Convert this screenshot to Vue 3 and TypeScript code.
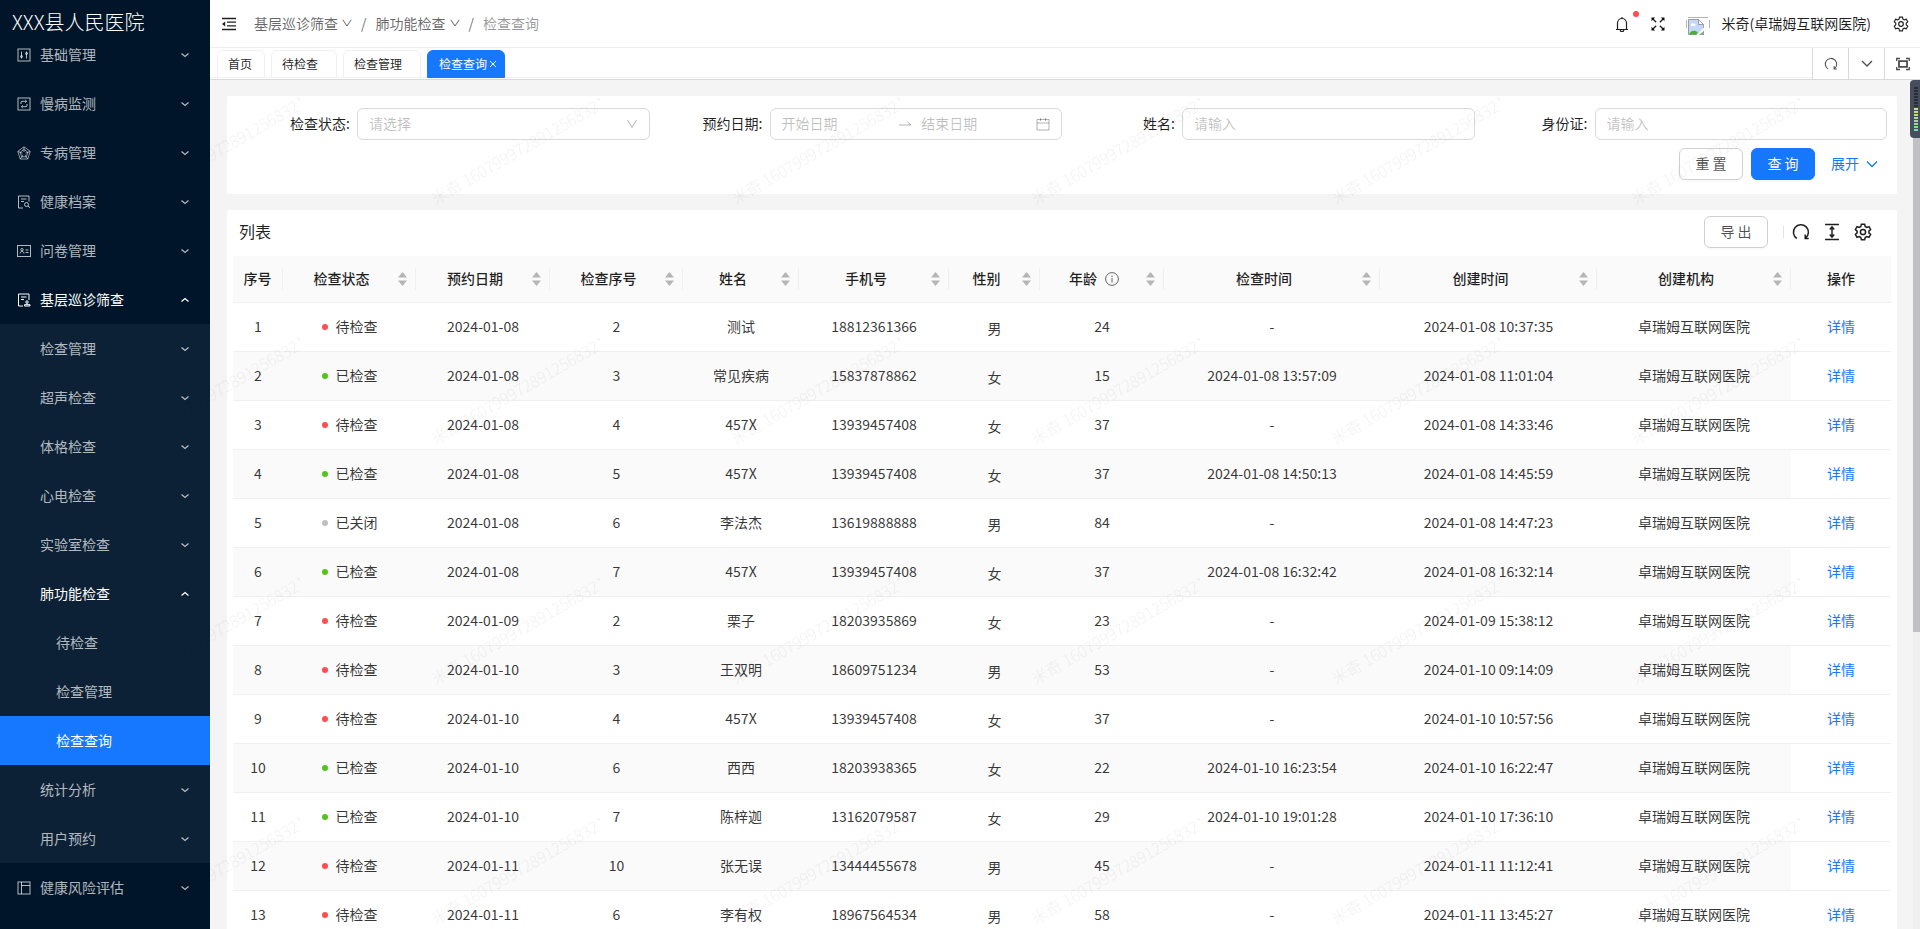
<script setup lang="ts">
interface MenuItem { text: string; level: number; icon?: string; arrow?: 'down' | 'up'; active?: boolean; open?: boolean }
interface Column { title: string; width: number; sort?: boolean; info?: boolean }
interface Row { status: string; date: string; no: number; name: string; phone: string; sex: string; age: number; checked: string; created: string }

const menu: MenuItem[] = [
  { text: '基础管理', level: 1, icon: 'control', arrow: 'down' },
  { text: '慢病监测', level: 1, icon: 'sync', arrow: 'down' },
  { text: '专病管理', level: 1, icon: 'radar', arrow: 'down' },
  { text: '健康档案', level: 1, icon: 'search', arrow: 'down' },
  { text: '问卷管理', level: 1, icon: 'idcard', arrow: 'down' },
  { text: '基层巡诊筛查', level: 1, icon: 'audit', arrow: 'up', open: true },
  { text: '检查管理', level: 2, arrow: 'down' },
  { text: '超声检查', level: 2, arrow: 'down' },
  { text: '体格检查', level: 2, arrow: 'down' },
  { text: '心电检查', level: 2, arrow: 'down' },
  { text: '实验室检查', level: 2, arrow: 'down' },
  { text: '肺功能检查', level: 2, arrow: 'up', open: true },
  { text: '待检查', level: 3 },
  { text: '检查管理', level: 3 },
  { text: '检查查询', level: 3, active: true },
  { text: '统计分析', level: 2, arrow: 'down' },
  { text: '用户预约', level: 2, arrow: 'down' },
  { text: '健康风险评估', level: 1, icon: 'layout', arrow: 'down' },
]

const tabs = [
  { text: '首页', closable: false, active: false },
  { text: '待检查', closable: true, active: false },
  { text: '检查管理', closable: true, active: false },
  { text: '检查查询', closable: true, active: true },
]

const columns: Column[] = [
  { title: '序号', width: 50 },
  { title: '检查状态', width: 133, sort: true },
  { title: '预约日期', width: 134, sort: true },
  { title: '检查序号', width: 133, sort: true },
  { title: '姓名', width: 116, sort: true },
  { title: '手机号', width: 150, sort: true },
  { title: '性别', width: 91, sort: true },
  { title: '年龄', width: 124, sort: true, info: true },
  { title: '检查时间', width: 216, sort: true },
  { title: '创建时间', width: 217, sort: true },
  { title: '创建机构', width: 194, sort: true },
  { title: '操作', width: 100 },
]

const dots: Record<string, string> = { 待检查: 'red', 已检查: 'green', 已关闭: 'gray' }

const row = (status: string, date: string, no: number, name: string, phone: string, sex: string, age: number, checked: string, created: string): Row =>
  ({ status, date, no, name, phone, sex, age, checked, created })

const rows: Row[] = [
  row('待检查', '2024-01-08', 2, '测试', '18812361366', '男', 24, '-', '2024-01-08 10:37:35'),
  row('已检查', '2024-01-08', 3, '常见疾病', '15837878862', '女', 15, '2024-01-08 13:57:09', '2024-01-08 11:01:04'),
  row('待检查', '2024-01-08', 4, '457X', '13939457408', '女', 37, '-', '2024-01-08 14:33:46'),
  row('已检查', '2024-01-08', 5, '457X', '13939457408', '女', 37, '2024-01-08 14:50:13', '2024-01-08 14:45:59'),
  row('已关闭', '2024-01-08', 6, '李法杰', '13619888888', '男', 84, '-', '2024-01-08 14:47:23'),
  row('已检查', '2024-01-08', 7, '457X', '13939457408', '女', 37, '2024-01-08 16:32:42', '2024-01-08 16:32:14'),
  row('待检查', '2024-01-09', 2, '栗子', '18203935869', '女', 23, '-', '2024-01-09 15:38:12'),
  row('待检查', '2024-01-10', 3, '王双明', '18609751234', '男', 53, '-', '2024-01-10 09:14:09'),
  row('待检查', '2024-01-10', 4, '457X', '13939457408', '女', 37, '-', '2024-01-10 10:57:56'),
  row('已检查', '2024-01-10', 6, '西西', '18203938365', '女', 22, '2024-01-10 16:23:54', '2024-01-10 16:22:47'),
  row('已检查', '2024-01-10', 7, '陈梓迦', '13162079587', '女', 29, '2024-01-10 19:01:28', '2024-01-10 17:36:10'),
  row('待检查', '2024-01-11', 10, '张无误', '13444455678', '男', 45, '-', '2024-01-11 11:12:41'),
  row('待检查', '2024-01-11', 6, '李有权', '18967564534', '男', 58, '-', '2024-01-11 13:45:27'),
]
</script>

<template>
  <div class="layout">
    <aside class="sider">
      <h1 class="brand">XXX县人民医院</h1>
      <nav class="menu">
        <a v-for="(m, i) in menu" :key="i" href="#" class="item" :class="['level' + m.level, { active: m.active, open: m.open }]">
          <svg v-if="m.icon" class="menu-icon" viewBox="0 0 14 14">
            <g v-if="m.icon === 'control'"><rect x="1" y="1" width="12" height="12" /><path d="M4.5 3.5v7M9.5 3.5v7" /><circle cx="4.5" cy="8.5" r="1" /><circle cx="9.5" cy="5.5" r="1" /></g>
            <g v-else-if="m.icon === 'sync'"><rect x="1" y="1" width="12" height="12" /><path d="M4 7V5.2C4 4.6 4.4 4.3 5 4.3h4M8.3 3l1.4 1.3-1.4 1.3M10 7v1.8c0 .6-.4.9-1 .9H5M5.7 8.4L4.3 9.700 5.700 11" /></g>
            <g v-else-if="m.icon === 'radar'"><path d="M7 .8l6.200 4.600-2.400 7.600H3.200L.8 5.400zM7 3.400l3.800 2.800-1.500 4.600H4.700L3.200 6.200zM7 1v5M1 5.500l4.500 1.700M13 5.500L8.500 7.200M3.300 13L6 9M10.700 13L8 9" stroke-width=".8" /></g>
            <g v-else-if="m.icon === 'search'"><path d="M6 13H1.500V1H12v5.500M4 4h5.500M4 6.500h3" /><circle cx="9.500" cy="9.500" r="2" /><path d="M11 11l2 2" /></g>
            <g v-else-if="m.icon === 'idcard'"><rect x=".5" y="1.500" width="13" height="11" /><circle cx="5" cy="5.700" r="1.200" /><path d="M3 9.500c.2-1.400 1-2 2-2s1.800.6 2 2M8.500 6h3M8.500 8.500h3" /></g>
            <g v-else-if="m.icon === 'audit'"><path d="M6 13H1.500V1H12v6M4 4h5.500M4 6.500h3" /><circle cx="10" cy="9" r="1.200" /><path d="M7.500 13H13v-1.300H7.500zM10 10v1.500" /></g>
            <g v-else><rect x="1" y="1" width="12" height="12" /><path d="M4.500 1v12M4.500 4.500H13" /></g>
          </svg>
          <span>{{ m.text }}</span>
          <svg v-if="m.arrow" class="arrow" viewBox="0 0 10 10"><path :d="m.arrow === 'down' ? 'M1.5 3.5L5 6.5l3.5-3' : 'M1.5 6.5L5 3.5l3.5 3'" /></svg>
        </a>
      </nav>
    </aside>

    <div class="main">
      <header class="header">
        <button class="icon-btn" aria-label="收起菜单">
          <svg width="16" height="16" viewBox="0 0 16 16"><path d="M1 2.500h14M6 6.200h9M6 9.800h9M1 13.500h14" fill="none" stroke="currentColor" stroke-width="1.300" /><path d="M1 8l3.200-2.600v5.200z" fill="currentColor" /></svg>
        </button>
        <nav class="crumbs">
          <a href="#">基层巡诊筛查<svg class="caret" viewBox="0 0 10 10"><path d="M.8 1.800L5 8l4.200-6.200" /></svg></a>
          <i>/</i>
          <a href="#">肺功能检查<svg class="caret" viewBox="0 0 10 10"><path d="M.8 1.800L5 8l4.200-6.200" /></svg></a>
          <i>/</i>
          <span>检查查询</span>
        </nav>
        <div class="user-tools">
          <button class="icon-btn bell" aria-label="通知">
            <svg width="16" height="16" viewBox="0 0 16 16" fill="none" stroke="currentColor" stroke-width="1.200"><path d="M2 13.500h12M3.500 13.500V7a4.500 4.500 0 0 1 9 0v6.500M8 2.500V1M6.300 14a1.700 1.700 0 0 0 3.400 0" /></svg>
            <em class="badge"></em>
          </button>
          <button class="icon-btn" aria-label="全屏">
            <svg width="16" height="16" viewBox="0 0 16 16" fill="none" stroke="currentColor" stroke-width="1.300"><path d="M6.200 6.200L2.200 2.200M9.800 6.200l4-4M6.200 9.800l-4 4M9.800 9.800l4 4" /><path d="M1.500 5.200V1.500h3.700zM14.500 5.200V1.500h-3.700zM1.500 10.800v3.700h3.700zM14.500 10.800v3.700h-3.700z" fill="currentColor" stroke="none" /></svg>
          </button>
          <a href="#" class="user">
            <svg class="avatar" width="24" height="24" viewBox="0 -5 24 24"><path d="M2 .5h20M.5 3v8M23.500 3v8" stroke="#b4b4b4" fill="none" /><path d="M2.500 2.500h10l5 5v10h-15z" fill="#c3d9f7" stroke="#9a9da3" /><path d="M12.500 2.500v5h5z" fill="#fff" stroke="#9a9da3" /><path d="M5 8c0-2 3-2.500 3.500-.8C10 7 10 9 9 9H5z" fill="#fff" /><path d="M3 17.500c1-4 6-5 9-2l-2 2z" fill="#4caf35" /><path d="M10 18.500l8-8v3l-5 5z" fill="#fff" /><path d="M13 18l5-4v4z" fill="#8fa08c" /></svg>
            <span>米奇(卓瑞姆互联网医院)</span>
          </a>
          <button class="icon-btn" aria-label="设置"><svg width="16" height="16" viewBox="0 0 18 18" class="gear"><path d="M7.400 1.200h3.200l.6 2.300 1.500.9 2.300-.7 1.600 2.800-1.700 1.600v1.800l1.700 1.600-1.600 2.800-2.300-.7-1.500.9-.6 2.300H7.400l-.6-2.300-1.500-.9-2.300.7-1.600-2.800 1.700-1.600V8.100L1.400 6.500 3 3.700l2.300.7 1.500-.9z" /><circle cx="9" cy="9" r="2.600" /></svg></button>
        </div>
      </header>

      <div class="tabbar">
        <div class="tabs">
          <button v-for="t in tabs" :key="t.text" class="tab" :class="{ active: t.active, closable: t.closable }">
            {{ t.text }}<svg v-if="t.active" class="close" viewBox="0 0 8 8"><path d="M1 1l6 6M7 1L1 7" /></svg>
          </button>
        </div>
        <button class="tab-tool" aria-label="刷新"><svg width="14" height="14" viewBox="0 0 18 18"><path d="M5 15.200A7.300 7.300 0 1 1 13.500 14.800" /><path d="M13 11.500v4h3.500" /></svg></button>
        <button class="tab-tool" aria-label="更多"><svg width="12" height="12" viewBox="0 0 12 12"><path d="M1 3l5 5 5-5" /></svg></button>
        <button class="tab-tool last" aria-label="内容全屏"><svg width="14" height="14" viewBox="0 0 14 14"><path d="M.7 4V1.500H4M10 1.500h3.300V4M13.300 10v2.500H10M4 12.500H.7V10" /><path d="M3 4.200h8v5.600H3z" stroke-width="1.800" /></svg></button>
      </div>

      <main class="content">
        <form class="card filters" @submit.prevent>
          <div class="field">
            <label for="state">检查状态:</label>
            <div class="control">
              <select id="state"><option>请选择</option></select>
              <svg class="suffix" viewBox="0 0 12 12"><path d="M1.500 2L6 9.500 10.500 2" /></svg>
            </div>
          </div>
          <div class="field">
            <label for="from">预约日期:</label>
            <div class="control range">
              <input id="from" placeholder="开始日期">
              <svg class="to" viewBox="0 0 14 14"><path d="M1 8h12L9.500 5" /></svg>
              <input id="until" aria-label="结束日期" placeholder="结束日期">
              <svg class="calendar" viewBox="0 0 14 14"><path d="M1 2.500h12V13H1zM1 6h12M4.500 1v3M9.500 1v3" /></svg>
            </div>
          </div>
          <div class="field">
            <label for="name">姓名:</label>
            <div class="control"><input id="name" placeholder="请输入"></div>
          </div>
          <div class="field">
            <label for="idno">身份证:</label>
            <div class="control"><input id="idno" placeholder="请输入"></div>
          </div>
          <div class="actions">
            <button type="reset" class="btn">重 置</button>
            <button type="submit" class="btn primary">查 询</button>
            <a href="#" class="expand"><span>展开</span><svg width="12" height="12" viewBox="0 0 12 12"><path d="M1 3.500l5 5 5-5" /></svg></a>
          </div>
        </form>

        <section class="card list">
          <div class="toolbar">
            <h2>列表</h2>
            <button class="btn export">导 出</button>
            <span class="split"></span>
            <button class="icon-btn tool" aria-label="刷新"><svg width="18" height="18" viewBox="0 0 18 18" class="line"><path d="M4.800 15.500A7.500 7.500 0 1 1 13.700 15" /><path d="M13.200 11.500v4h3.500" /></svg></button>
            <button class="icon-btn tool" aria-label="密度"><svg width="18" height="18" viewBox="0 0 18 18" class="line"><path d="M2 1.500h14M2 16.500h14M9 4.500v9M6.800 6.500L9 4l2.200 2.500M6.800 11.500L9 14l2.200-2.500" /></svg></button>
            <button class="icon-btn tool" aria-label="列设置"><svg width="18" height="18" viewBox="0 0 18 18" class="gear strong"><path d="M7.400 1.200h3.200l.6 2.300 1.500.9 2.300-.7 1.600 2.800-1.700 1.600v1.800l1.700 1.600-1.600 2.800-2.300-.7-1.500.9-.6 2.300H7.400l-.6-2.300-1.500-.9-2.300.7-1.600-2.800 1.700-1.600V8.100L1.400 6.500 3 3.700l2.300.7 1.500-.9z" /><circle cx="9" cy="9" r="2.600" /></svg></button>
          </div>
          <table>
            <colgroup><col v-for="c in columns" :key="c.title" :style="{ width: c.width + 'px' }"></colgroup>
            <thead>
              <tr>
                <th v-for="c in columns" :key="c.title" scope="col">
                  <div class="th">
                    <div class="title"><span>{{ c.title }}</span><svg v-if="c.info" class="info" viewBox="0 0 14 14"><circle cx="7" cy="7" r="6.400" /><path d="M7 6v4.500M7 3.500V5" /></svg></div>
                    <svg v-if="c.sort" class="sorter" viewBox="0 0 9 14"><path d="M0 5.500L4.500 0 9 5.500zM0 8.500h9L4.500 14z" /></svg>
                  </div>
                </th>
              </tr>
            </thead>
            <tbody>
              <tr v-for="(r, i) in rows" :key="i">
                <td>{{ i + 1 }}</td>
                <td><div class="status"><i :class="dots[r.status]"></i>{{ r.status }}</div></td>
                <td>{{ r.date }}</td>
                <td>{{ r.no }}</td>
                <td>{{ r.name }}</td>
                <td>{{ r.phone }}</td>
                <td class="sex">{{ r.sex }}</td>
                <td>{{ r.age }}</td>
                <td>{{ r.checked }}</td>
                <td>{{ r.created }}</td>
                <td>卓瑞姆互联网医院</td>
                <td class="op"><a href="#">详情</a></td>
              </tr>
            </tbody>
          </table>
        </section>
      </main>
    </div>

    <svg class="watermark" aria-hidden="true">
      <defs>
        <pattern id="mark" width="300" height="240" patternUnits="userSpaceOnUse">
          <text x="0" y="0" transform="translate(136 205) rotate(-30)">米奇 1607999728912568321</text>
        </pattern>
      </defs>
      <rect width="100%" height="100%" fill="url(#mark)" />
    </svg>
    <div class="scroll-track"><div class="scroll-thumb"></div></div>
    <div class="meter"><span></span></div>
  </div>
</template>

<style>
body { margin: 0; overflow: hidden; }
</style>

<style scoped>
.layout {
  display: flex; height: 100vh; overflow: hidden; position: relative;
  font-family: "Noto Sans CJK SC", sans-serif; font-size: 14px; line-height: 22px; font-weight: 400;
  color: rgba(0, 0, 0, 0.88); background: #f4f4f4;
}
* { box-sizing: border-box; }
button, input, select { font: inherit; color: inherit; }
a { text-decoration: none; color: inherit; }
svg { flex: none; }
.sider { width: 210px; flex: none; background: #001529; color: rgba(255, 255, 255, 0.7); overflow: hidden; }
.brand { margin: 0; height: 30px; padding: 11px 0 0 12px; font-size: 20px; line-height: 22px; font-weight: 300; color: #fff; white-space: nowrap; }
.item { display: flex; align-items: center; height: 49px; padding: 0 20px 0 40px; }
.item span, .title span, .user span, .expand span { padding-bottom: 2px; }
.level1 { padding-left: 17px; }
.level2, .level3 { background: #0c2135; }
.level3 { padding-left: 56px; }
.item.open { color: #fff; }
.item.active { background: #1677ff; color: #fff; }
.menu-icon { width: 14px; height: 14px; margin-right: 9px; fill: none; stroke: currentColor; }
.arrow { width: 10px; height: 10px; margin-left: auto; fill: none; stroke: currentColor; stroke-width: 1.3; }
.main { flex: 1; min-width: 0; display: flex; flex-direction: column; }
.header { display: flex; align-items: center; height: 48px; flex: none; padding: 0 11px; background: #fff; border-bottom: 1px solid #eee; }
.icon-btn { display: flex; padding: 0; border: 0; background: none; }
.crumbs { display: flex; align-items: center; margin-left: 17px; padding-bottom: 2px; color: rgba(0, 0, 0, 0.6); }
.crumbs a { display: flex; align-items: center; gap: 4px; }
.crumbs i { margin: 0 9px; font-style: normal; }
.crumbs span { color: rgba(0, 0, 0, 0.42); }
.caret { width: 10px; height: 10px; fill: none; stroke: currentColor; }
.user-tools { display: flex; align-items: center; margin-left: auto; gap: 20px; }
.bell { position: relative; }
.badge { position: absolute; top: -5px; right: -9px; width: 6px; height: 6px; border-radius: 50%; background: #ff4d4f; }
.user { display: flex; align-items: center; gap: 12px; margin-right: 2px; }
.gear { fill: none; stroke: currentColor; stroke-width: 1.3; }
.tabbar { display: flex; height: 32px; flex: none; background: #fff; border-bottom: 1px solid #d9d9d9; }
.tabs { display: flex; flex: 1; gap: 6px; height: 30px; padding: 2px 0 0 7px; border-bottom: 1px solid #f0f0f0; }
.tab { display: flex; align-items: center; padding: 0 12px 0 10px; height: 28px; border: 1px solid #f0f0f0; border-radius: 6px 6px 0 0; background: #fff; font-size: 12px; }
.tab.closable { padding-right: 18px; }
.tab.active { background: #1677ff; border-color: #1677ff; color: #fff; padding: 0 7px 0 11px; }
.close { width: 8px; height: 8px; margin-left: 2px; fill: none; stroke: currentColor; }
.tab-tool { width: 36px; display: flex; align-items: center; justify-content: center; padding: 0; border: 0; border-left: 1px solid #d9d9d9; background: #fff; color: rgba(0, 0, 0, 0.7); }
.tab-tool svg { fill: none; stroke: currentColor; stroke-width: 1.3; }
.content { flex: 1; min-height: 0; padding: 16px 23px 0 17px; overflow: hidden; }
.card { background: #fff; border-radius: 2px; }
.filters { display: grid; grid-template-columns: repeat(4, 1fr); row-gap: 8px; padding: 12px 10px 14px; }
.field { display: grid; grid-template-columns: 120px 1fr; align-items: center; }
.field label { text-align: right; padding: 0 7px 2px 0; }
.control { position: relative; height: 32px; display: flex; align-items: center; border: 1px solid #d9d9d9; border-radius: 6px; padding: 0 11px; }
.control input, .control select { width: 100%; min-width: 0; padding: 0 0 2px; border: 0; outline: 0; background: transparent; appearance: none; }
.control select, .control input::placeholder { color: rgba(0, 0, 0, 0.25); opacity: 1; }
.suffix, .calendar, .to { width: 12px; height: 12px; fill: none; stroke: rgba(0, 0, 0, 0.3); }
.calendar { width: 14px; height: 14px; }
.to { width: 14px; height: 14px; margin: 0 9px 0 2px; }
.actions { grid-column: 1 / -1; display: flex; justify-content: flex-end; align-items: center; gap: 8px; }
.btn { min-width: 64px; height: 32px; padding: 0 15px 2px; border: 1px solid #d0d0d0; border-radius: 6px; background: #fff; box-shadow: 0 2px 0 rgba(0, 0, 0, 0.02); color: rgba(0, 0, 0, 0.7); }
.btn.primary { background: #1677ff; border-color: #1677ff; color: #fff; }
.expand { display: flex; align-items: center; gap: 7px; padding: 0 9px 0 8px; color: #1677ff; }
.expand svg { fill: none; stroke: currentColor; stroke-width: 1.3; }
.list { margin-top: 16px; padding: 0 6px; min-height: 100%; }
.toolbar { display: flex; align-items: center; height: 46px; padding: 0 19px 2px 6px; }
.toolbar h2 { margin: 0; padding-bottom: 2px; font-size: 16px; font-weight: 400; }
.export { margin-left: auto; }
.split { width: 1px; height: 12px; margin: 0 8px 0 15px; background: #e4e4e4; }
.tool { margin-left: 13px; }
.split + .tool { margin-left: 0; }
.line { fill: none; stroke: currentColor; stroke-width: 1.5; }
.strong { stroke-width: 1.5; }
table { width: 100%; table-layout: fixed; border-collapse: separate; border-spacing: 0; }
th, td { padding: 0; text-align: center; border-bottom: 1px solid #f0f0f0; white-space: nowrap; }
th { height: 47px; background: #fafafa; font-weight: 500; }
.th { display: flex; align-items: center; height: 22px; border-right: 1px solid #f0f0f0; padding: 0 8px; }
th:last-child .th { border-right: 0; }
.title { flex: 1; display: flex; align-items: center; justify-content: center; }
.sorter { width: 9px; height: 14px; margin-left: 6px; fill: #b5b5b5; }
.info { width: 14px; height: 14px; margin-left: 8px; fill: none; stroke: rgba(0, 0, 0, 0.6); }
td { height: 49px; padding-bottom: 2px; color: rgba(0, 0, 0, 0.8); }
tbody tr:nth-child(even) td { background: #fafafa; }
tbody tr td.op { background: #fff; }
.op a { color: #1677ff; }
td.sex { padding: 2px 0 0; }
.status { display: flex; align-items: center; justify-content: center; gap: 8px; }
.status i { width: 6px; height: 6px; margin-top: 2px; border-radius: 50%; }
.red { background: #ff4d4f; }
.green { background: #52c41a; }
.gray { background: #bfbfbf; }
.watermark { position: absolute; inset: 0; width: 100%; height: 100%; pointer-events: none; }
.watermark text { font-size: 16px; font-weight: 300; fill: rgba(0, 0, 0, 0.05); }
.scroll-track { position: absolute; top: 80px; right: 0; bottom: 0; width: 7px; background: #f0f0f0; }
.scroll-thumb { height: 65%; background: #c1c1c4; }
.meter { position: absolute; top: 80px; right: 0; width: 10px; height: 58px; padding: 7px 2px 0 4px; border-radius: 4px 0 0 4px; background: #464d5c; }
.meter span { display: block; height: 45px; background: repeating-linear-gradient(transparent 0 2px, #464d5c 2px 3px), linear-gradient(#2a2d38 0 20px, #d9e070 20px, #6fd6b5); }
</style>
